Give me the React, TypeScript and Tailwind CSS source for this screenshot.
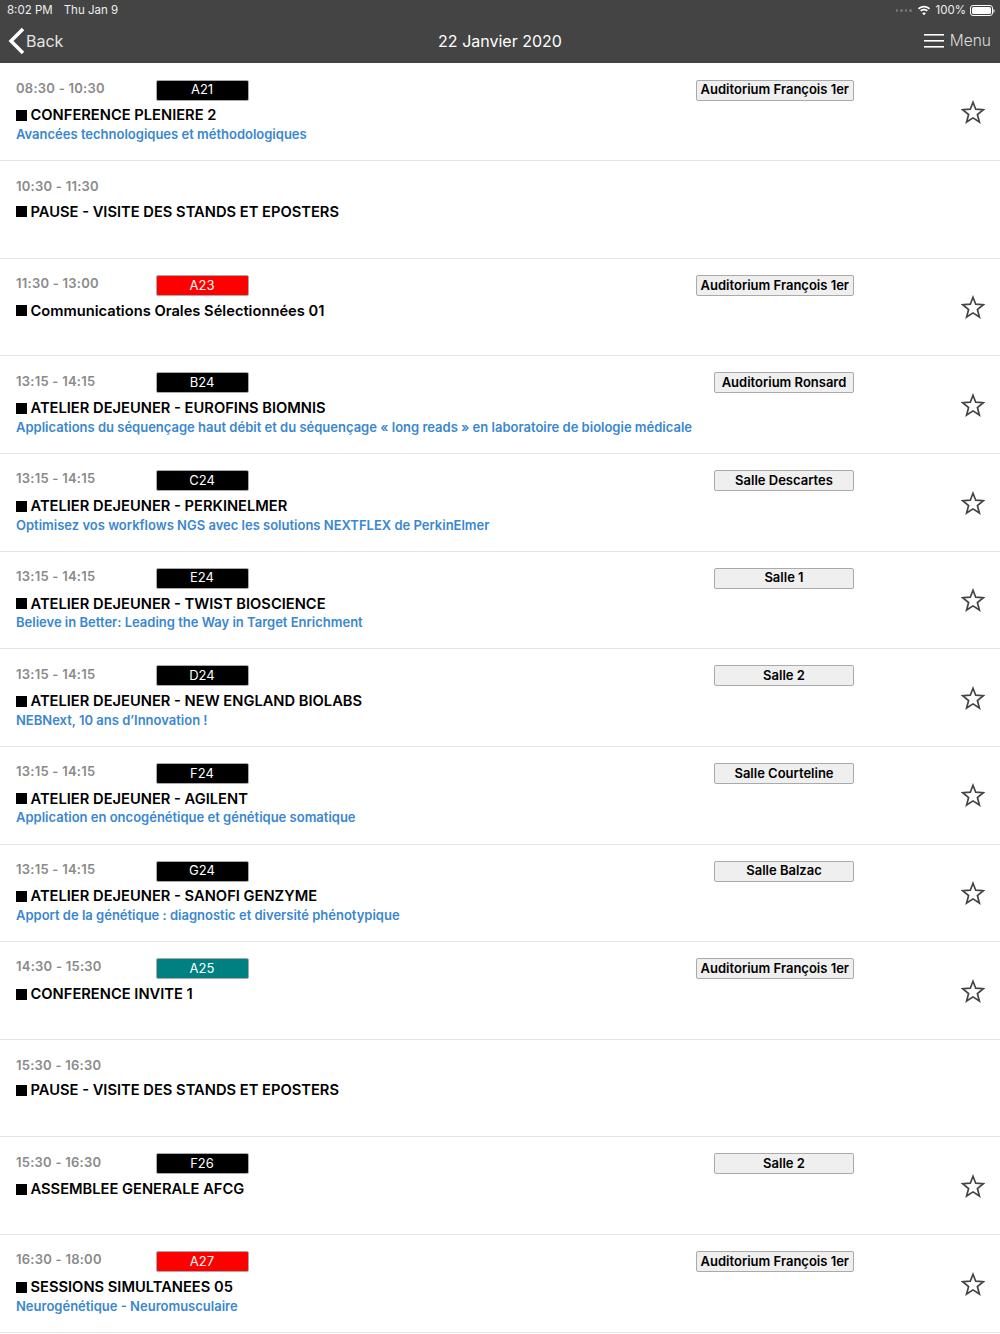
type Session = {
  time: string;
  code?: string;
  color?: string;
  room?: string;
  title: string;
  subtitle?: string;
};

const sessions: Session[] = [
  { time: "08:30 - 10:30", code: "A21", color: "bg-black", room: "Auditorium François 1er", title: "CONFERENCE PLENIERE 2", subtitle: "Avancées technologiques et méthodologiques" },
  { time: "10:30 - 11:30", title: "PAUSE - VISITE DES STANDS ET EPOSTERS" },
  { time: "11:30 - 13:00", code: "A23", color: "bg-[#ff0000]", room: "Auditorium François 1er", title: "Communications Orales Sélectionnées 01" },
  { time: "13:15 - 14:15", code: "B24", color: "bg-black", room: "Auditorium Ronsard", title: "ATELIER DEJEUNER - EUROFINS BIOMNIS", subtitle: "Applications du séquençage haut débit et du séquençage « long reads » en laboratoire de biologie médicale" },
  { time: "13:15 - 14:15", code: "C24", color: "bg-black", room: "Salle Descartes", title: "ATELIER DEJEUNER - PERKINELMER", subtitle: "Optimisez vos workflows NGS avec les solutions NEXTFLEX de PerkinElmer" },
  { time: "13:15 - 14:15", code: "E24", color: "bg-black", room: "Salle 1", title: "ATELIER DEJEUNER - TWIST BIOSCIENCE", subtitle: "Believe in Better: Leading the Way in Target Enrichment" },
  { time: "13:15 - 14:15", code: "D24", color: "bg-black", room: "Salle 2", title: "ATELIER DEJEUNER - NEW ENGLAND BIOLABS", subtitle: "NEBNext, 10 ans d’Innovation !" },
  { time: "13:15 - 14:15", code: "F24", color: "bg-black", room: "Salle Courteline", title: "ATELIER DEJEUNER - AGILENT", subtitle: "Application en oncogénétique et génétique somatique" },
  { time: "13:15 - 14:15", code: "G24", color: "bg-black", room: "Salle Balzac", title: "ATELIER DEJEUNER - SANOFI GENZYME", subtitle: "Apport de la génétique : diagnostic et diversité phénotypique" },
  { time: "14:30 - 15:30", code: "A25", color: "bg-[#008080]", room: "Auditorium François 1er", title: "CONFERENCE INVITE 1" },
  { time: "15:30 - 16:30", title: "PAUSE - VISITE DES STANDS ET EPOSTERS" },
  { time: "15:30 - 16:30", code: "F26", color: "bg-black", room: "Salle 2", title: "ASSEMBLEE GENERALE AFCG" },
  { time: "16:30 - 18:00", code: "A27", color: "bg-[#ff0000]", room: "Auditorium François 1er", title: "SESSIONS SIMULTANEES 05", subtitle: "Neurogénétique - Neuromusculaire" },
];

function StarIcon() {
  return (
    <svg className="absolute right-[15px] top-[36.5px]" width="24" height="24" viewBox="0 0 24 24" fill="none" stroke="#444" strokeWidth="1.7" strokeLinejoin="miter">
      <path d="M12 2.300 14.700 9.200 22.300 9.700 16.400 14.500 18.400 22 12 17.900 5.600 22 7.600 14.500 1.700 9.700 9.300 9.200Z" />
    </svg>
  );
}

function SessionRow({ s }: { s: Session }) {
  return (
    <div className="relative h-[97.625px] border-b border-[#e4e4e4] pl-4 pt-[16px]">
      <div className={`flex items-center ${s.code ? "h-[21px]" : "h-[19.5px]"}`}>
        <span className={`w-[140px] text-[13px] font-semibold tracking-[0.25px] text-[#8a8a8a] ${s.code ? "pb-[3px]" : "pb-[0.5px]"}`}>{s.time}</span>
        {s.code && (
          <span className={`-ml-[0.5px] flex h-[21px] w-[93px] items-center justify-center rounded-[2px] border border-[#aaa] text-[13px] text-white ${s.color}`}>
            {s.code}
          </span>
        )}
        {s.room && (
          <span className="ml-auto mr-[146px] flex h-[21px] min-w-[140px] items-center justify-center rounded-[2px] border border-[#aaa] bg-[#efefef] px-[4px] text-[13px] font-semibold text-black">
            {s.room}
          </span>
        )}
      </div>
      <div className="mt-[5.5px] flex h-[19px] items-center text-[14.700px] font-semibold text-black">
        <span className="mr-[3.500px] h-[11px] w-[11px] bg-black" />
        {s.title}
      </div>
      {s.subtitle && (
        <div className="h-[19px] text-[13px] leading-[19px] font-semibold text-[#3a87d0]">{s.subtitle}</div>
      )}
      {s.room && <StarIcon />}
    </div>
  );
}

export default function App() {
  return (
    <div className="h-[1334px] w-[1000px] overflow-hidden bg-white font-['Inter',sans-serif]">
      {/* Status + nav bar */}
      <div className="h-[63px] bg-[#444444] text-white">
        <div className="flex h-[20px] items-center pl-[7px] pr-[7px] pt-[1px] text-[11.500px] text-[#eee]">
          <span>8:02 PM</span>
          <span className="ml-[11px]">Thu Jan 9</span>
          <div className="ml-auto flex items-center">
            <span className="mr-[5px] flex gap-[2px]">
              <i className="h-[2.500px] w-[2.500px] rounded-full bg-[#777]" />
              <i className="h-[2.500px] w-[2.500px] rounded-full bg-[#777]" />
              <i className="h-[2.500px] w-[2.500px] rounded-full bg-[#777]" />
              <i className="h-[2.500px] w-[2.500px] rounded-full bg-[#777]" />
            </span>
            <svg className="mr-[5px]" width="14" height="11" viewBox="0 0 15 11" fill="#fff">
              <path d="M7.5 2.2c2 0 3.9.8 5.3 2.1l1.2-1.2C12.3 1.4 10 .4 7.5.4S2.7 1.4 1 3.1l1.2 1.2c1.4-1.3 3.300-2.100 5.300-2.100z" />
              <path d="M7.500 5.400c1.100 0 2.100.4 2.900 1.100l1.200-1.200C10.500 4.300 9.100 3.700 7.500 3.700s-3 .6-4.100 1.600l1.200 1.200c.8-.7 1.800-1.100 2.900-1.100z" />
              <path d="M7.500 10.500l2-2.100c-.5-.5-1.200-.8-2-.8s-1.500.3-2 .8z" />
            </svg>
            <span>100%</span>
            <span className="relative ml-[4px] flex h-[11px] w-[23px] items-center rounded-[3px] border border-white p-[1px]">
              <span className="h-full w-full rounded-[1.500px] bg-white" />
              <span className="absolute -right-[3px] h-[4px] w-[2px] rounded-r-full bg-[#aaa]" />
            </span>
          </div>
        </div>
        <div className="relative flex h-[42px] items-center justify-between pl-[8px] pr-[9px]">
          <div className="flex items-center gap-[1px]">
            <svg width="17" height="28" viewBox="0 0 17 28" fill="none" stroke="#fff" strokeWidth="3.500">
              <path d="M15 2 3 14l12 12" />
            </svg>
            <span className="text-[16px] text-[#e4e4e4]">Back</span>
          </div>
          <span className="absolute left-0 right-0 text-center text-[16px] text-white">22 Janvier 2020</span>
          <div className="flex items-center gap-[6px]">
            <svg width="20" height="14" viewBox="0 0 20 14" fill="#fff">
              <rect width="20" height="1.600" y="0" />
              <rect width="20" height="1.600" y="6" />
              <rect width="20" height="1.600" y="12" />
            </svg>
            <span className="text-[15.500px] font-light text-[#ddd]">Menu</span>
          </div>
        </div>
      </div>

      <div className="pt-[0.5px]">
        {sessions.map((s, i) => (
          <SessionRow key={i} s={s} />
        ))}
      </div>
    </div>
  );
}
